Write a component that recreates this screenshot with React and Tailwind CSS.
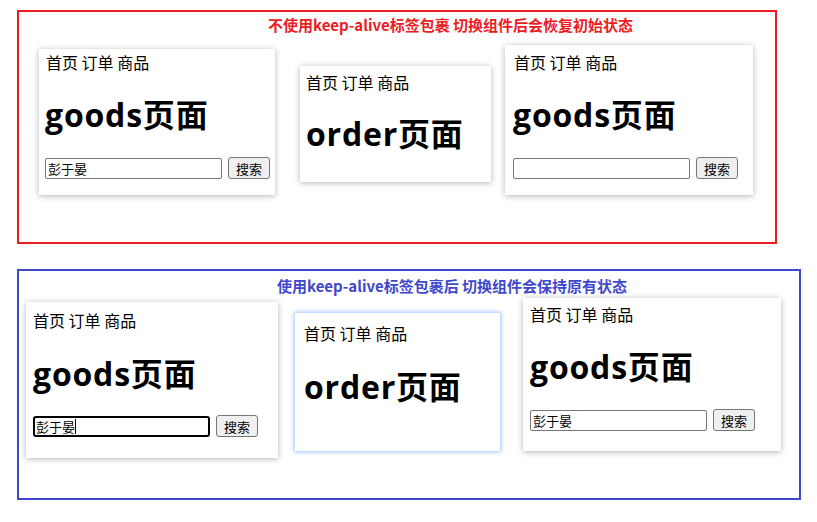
const font = { fontFamily: '"Noto Sans CJK SC", "Noto Sans", sans-serif' }
const headFont = { fontFamily: '"Open Sans", "Noto Sans CJK SC", sans-serif' }

const Card = ({ box, nav, head, form, kind, value, focused }) => {
  return (
    <div className={`bg-white flex flex-col shrink-0 ${box}`}>
      <div className={`h-5 leading-5 text-[16px] text-black whitespace-nowrap ${nav}`}>首页 订单 商品</div>
      <h1
        className={`h-10 leading-10 text-[32px] font-bold text-black whitespace-nowrap tracking-[0.8px] ${head}`}
        style={headFont}
      >
        {kind}页面
      </h1>
      {form && (
        <div className={`flex items-center gap-[6px] ${form}`}>
          <div
            className={
              focused
                ? "w-[177px] h-[21px] border-2 border-black rounded-[3px] flex items-center px-[1px] text-[13px] leading-none text-black"
                : "w-[177px] h-[21px] border border-[#767676] rounded-[2px] flex items-center px-[2px] text-[13px] leading-none text-black"
            }
          >
            {value}
            {focused && <span className="inline-block w-px h-[15px] bg-black" />}
          </div>
          <button className="w-[42px] h-[22px] bg-[#efefef] border border-[#767676] rounded-[3px] text-[13px] leading-none text-black">
            搜索
          </button>
        </div>
      )}
    </div>
  )
}

const shadow = "shadow-[0_1px_6px_rgba(0,0,0,0.3)]"

export default function App() {
  return (
    <div className="w-[817px] h-[522px] bg-white overflow-hidden" style={font}>
      <div className="ml-[17px] mt-[10px] w-[760px] h-[234px] border-2 border-[#ec1c24] flex flex-col">
        <div className="mt-[3px] h-5 leading-5 pl-[249px] text-[15px] font-bold text-[#ec1c24] whitespace-nowrap">
          不使用keep-alive标签包裹 切换组件后会恢复初始状态
        </div>
        <div className="flex items-start">
          <Card
            box={`ml-[20px] mt-[14px] w-[236px] h-[146px] pl-[6px] pt-[3px] ${shadow}`}
            nav="pl-[1px]"
            head="mt-[23px]"
            form="mt-[22px]"
            kind="goods"
            value="彭于晏"
          />
          <Card
            box={`ml-[25px] mt-[31px] w-[191px] h-[116px] pl-[6px] pt-[6px] ${shadow}`}
            nav=""
            head="mt-[22px]"
            kind="order"
          />
          <Card
            box={`ml-[14px] mt-[10px] w-[248px] h-[150px] pl-[8px] pt-[7px] ${shadow}`}
            nav="pl-[1px]"
            head="mt-[23px]"
            form="mt-[22px]"
            kind="goods"
            value=""
          />
        </div>
      </div>

      <div className="ml-[17px] mt-[25px] w-[784px] h-[231px] border-2 border-[#3f48cc] flex flex-col">
        <div className="mt-[5px] h-5 leading-5 pl-[258px] text-[15px] font-bold text-[#3f48cc] whitespace-nowrap">
          使用keep-alive标签包裹后 切换组件会保持原有状态
        </div>
        <div className="flex items-start">
          <Card
            box={`ml-[7px] mt-[6px] w-[252px] h-[156px] pl-[7px] pt-[8px] ${shadow}`}
            nav=""
            head="mt-[24px]"
            form="mt-[21px]"
            kind="goods"
            value="彭于晏"
            focused
          />
          <Card
            box="ml-[17px] mt-[17px] w-[205px] h-[138px] pl-[9px] pt-[10px] shadow-[0_0_4px_1px_rgba(100,160,255,0.65)]"
            nav=""
            head="mt-[24px]"
            kind="order"
          />
          <Card
            box={`ml-[23px] mt-[2px] w-[258px] h-[153px] pl-[7px] pt-[6px] ${shadow}`}
            nav=""
            head="mt-[23px]"
            form="mt-[22px]"
            kind="goods"
            value="彭于晏"
          />
        </div>
      </div>
    </div>
  )
}
